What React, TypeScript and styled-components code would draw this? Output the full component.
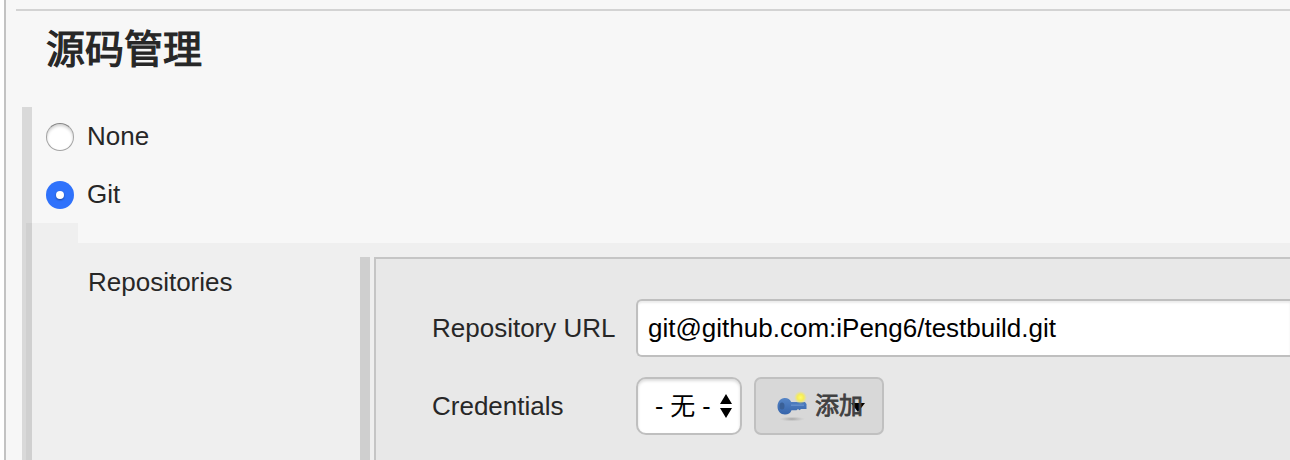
import React from 'react';
import styled, { createGlobalStyle } from 'styled-components';

const GlobalStyle = createGlobalStyle`
  * { box-sizing: border-box; }
  body {
    margin: 0;
    overflow: hidden;
    background: #fff;
    color: #272727;
    font: 26px/30px "Liberation Sans", "Noto Sans CJK SC", sans-serif;
  }
`;

const Page = styled.main`
  display: flex;
  flex-direction: column;
  height: 460px;
  margin-left: 4px;
  border-left: 2px solid #c3c3c3;
  background: #f7f7f7;
  overflow: hidden;
`;

const Divider = styled.hr`
  flex: none;
  width: auto;
  height: 2px;
  margin: 9px 0 0 10px;
  border: 0;
  background: #d3d3d3;
`;

const Title = styled.h2`
  flex: none;
  height: 96px;
  margin: 0;
  padding: 7px 0 0 40px;
  font: 400 39px/56px "Noto Sans CJK SC", sans-serif;
  -webkit-text-stroke: 1.2px #272727;
`;

const Section = styled.section`
  display: flex;
  flex: 1;
  padding-left: 16px;
`;

const Gutter = styled.div`
  width: 10px;
  padding: 116px 0 0 4px;
  background: #d9d9d9;
`;

const NestedGutter = styled.div`
  height: 100%;
  background: #d0d0d0;
`;

const Body = styled.div`
  display: flex;
  flex: 1;
  flex-direction: column;
`;

const RadioRow = styled.label`
  display: flex;
  align-items: center;
  gap: 13px;
  height: 58px;
  padding: 2px 0 0 14px;
`;

const Radio = styled.span<{ $checked?: boolean }>`
  display: flex;
  align-items: center;
  justify-content: center;
  width: 28px;
  height: 28px;
  border-radius: 50%;
  border: ${p => (p.$checked ? '0' : '1px solid #a3a3a3')};
  border-top-color: #858585;
  background: ${p => (p.$checked ? '#2f72fb' : '#fff')};
  box-shadow: ${p => (p.$checked ? 'none' : 'inset 0 2px 3px rgba(0,0,0,.18)')};

  &::after {
    content: '';
    display: ${p => (p.$checked ? 'block' : 'none')};
    width: 8px;
    height: 8px;
    border-radius: 50%;
    background: #fff;
    box-shadow: 0 1px 2px rgba(0, 0, 0, .4);
  }
`;

const RadioText = styled.span`
  margin-top: -2px;
`;

const Nested = styled.div`
  display: flex;
  flex: 1;
`;

const Indent = styled.div`
  width: 46px;
  background: #efefef;
`;

const NestedBody = styled.div`
  display: flex;
  flex: 1;
  margin-top: 20px;
  padding: 14px 0 0 10px;
  background: #efefef;
`;

const GroupName = styled.div`
  width: 272px;
  padding-top: 10px;
`;

const RepoGutter = styled.div`
  width: 10px;
  margin-right: 4px;
  background: #cfcfcf;
`;

const RepoPanel = styled.div`
  display: flex;
  flex: 1;
  flex-direction: column;
  gap: 20px;
  padding: 40px 0 0 56px;
  border: 2px solid #c5c5c5;
  border-width: 2px 0 0 2px;
  background: #e8e8e8;
`;

const Field = styled.div`
  display: flex;
  align-items: center;
  height: 58px;
`;

const FieldName = styled.div`
  flex: none;
  width: 204px;
  white-space: nowrap;
`;

const TextInput = styled.div`
  flex: 1;
  height: 58px;
  padding: 12px 10px;
  border: 2px solid #bfbfbf;
  border-right: 0;
  border-radius: 6px 0 0 6px;
  background: #fff;
  color: #000;
  box-shadow: inset 0 2px 2px rgba(0, 0, 0, .08);
`;

const Select = styled.div`
  display: flex;
  align-items: center;
  justify-content: space-between;
  width: 106px;
  height: 58px;
  margin-right: 12px;
  padding: 0 8px 0 17px;
  border: 2px solid #bfbfbf;
  border-radius: 10px;
  background: #fff;
  color: #000;
  font-size: 25px;
  white-space: nowrap;
  box-shadow: inset 0 2px 3px rgba(0, 0, 0, .14);
`;

const AddButton = styled.div`
  position: relative;
  display: flex;
  align-items: center;
  gap: 7px;
  width: 130px;
  height: 58px;
  padding-left: 20px;
  border: 2px solid #c0c0c0;
  border-radius: 7px;
  background: #d8d8d8;
`;

const AddText = styled.span`
  z-index: 1;
  margin-top: -4px;
  color: #404040;
  font: 400 24px/30px "Noto Sans CJK SC", sans-serif;
  -webkit-text-stroke: .8px #404040;
`;

const Caret = styled.svg`
  position: absolute;
  left: 95px;
  top: 24px;
`;

const KeyIcon = () => (
  <svg width="32" height="32" viewBox="0 0 32 32">
    <defs>
      <radialGradient id="glow">
        <stop offset="0" stopColor="#fffb6a" />
        <stop offset=".5" stopColor="#f5ec58" />
        <stop offset="1" stopColor="#eee67a" stopOpacity="0" />
      </radialGradient>
      <radialGradient id="shade">
        <stop offset="0" stopColor="#a4a4a4" />
        <stop offset="1" stopColor="#bbb" stopOpacity="0" />
      </radialGradient>
      <linearGradient id="metal" x1="0" y1="0" x2="0" y2="1">
        <stop offset="0" stopColor="#5685c6" />
        <stop offset="1" stopColor="#3564ab" />
      </linearGradient>
    </defs>
    <ellipse cx="16" cy="29" rx="13" ry="2.5" fill="url(#shade)" />
    <path
      d="M9 8c3 0 5 1.500 6.200 4H29l1.500 2v5h-5.500l-1.500 1.200-1.500-1.200-1.500 1.200h-5c-1 3-3.200 4.300-6.500 4.300-4.500 0-7.500-3.300-7.500-8s3-8.500 7-8.500z"
      fill="url(#metal)"
    />
    <ellipse cx="6" cy="16" rx="2.500" ry="3.500" fill="#3a6097" />
    <path d="M15 15.200h13" stroke="#6690cc" strokeWidth="1.400" />
    <circle cx="24.500" cy="7.500" r="6.500" fill="url(#glow)" />
  </svg>
);

export default function App() {
  return (
    <>
      <GlobalStyle />
      <Page>
        <Divider />
        <Title>源码管理</Title>
        <Section>
          <Gutter><NestedGutter /></Gutter>
          <Body>
            <RadioRow><Radio /><RadioText>None</RadioText></RadioRow>
            <RadioRow><Radio $checked /><RadioText>Git</RadioText></RadioRow>
            <Nested>
              <Indent />
              <NestedBody>
                <GroupName>Repositories</GroupName>
                <RepoGutter />
                <RepoPanel>
                  <Field>
                    <FieldName>Repository URL</FieldName>
                    <TextInput>git@github.com:iPeng6/testbuild.git</TextInput>
                  </Field>
                  <Field>
                    <FieldName>Credentials</FieldName>
                    <Select>
                      <span>- 无 -</span>
                      <svg width="12" height="24" viewBox="0 0 12 24">
                        <path d="M6 0l6 10H0zM6 24l6-10H0z" fill="#000" />
                      </svg>
                    </Select>
                    <AddButton>
                      <KeyIcon />
                      <AddText>添加</AddText>
                      <Caret width="14" height="9" viewBox="0 0 14 9">
                        <path d="M0 0h14L7 9z" fill="#000" />
                      </Caret>
                    </AddButton>
                  </Field>
                </RepoPanel>
              </NestedBody>
            </Nested>
          </Body>
        </Section>
      </Page>
    </>
  );
}
